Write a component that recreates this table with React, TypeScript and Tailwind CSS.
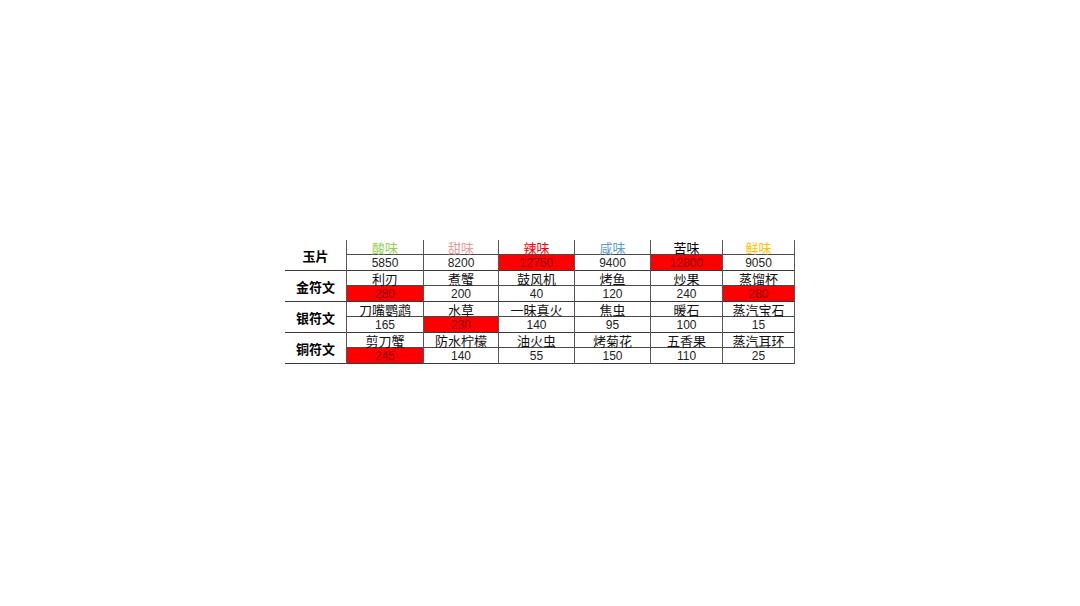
import React from "react";

type Cell = { text: string; color?: string; red?: boolean };

const widths = ["w-[77px]", "w-[75px]", "w-[76px]", "w-[76px]", "w-[72px]", "w-[73px]"];

const groups: { label: string; top: Cell[]; bottom: Cell[] }[] = [
  {
    label: "玉片",
    top: [
      { text: "酸味", color: "text-[#92d050]" },
      { text: "甜味", color: "text-[#e99a9a]" },
      { text: "辣味", color: "text-[#ff0000]" },
      { text: "咸味", color: "text-[#5b9bd5]" },
      { text: "苦味", color: "text-black" },
      { text: "鲜味", color: "text-[#ffc000]" },
    ],
    bottom: [
      { text: "5850" },
      { text: "8200" },
      { text: "12750", red: true },
      { text: "9400" },
      { text: "12800", red: true },
      { text: "9050" },
    ],
  },
  {
    label: "金符文",
    top: [{ text: "利刃" }, { text: "煮蟹" }, { text: "鼓风机" }, { text: "烤鱼" }, { text: "炒果" }, { text: "蒸馏杯" }],
    bottom: [
      { text: "280", red: true },
      { text: "200" },
      { text: "40" },
      { text: "120" },
      { text: "240" },
      { text: "280", red: true },
    ],
  },
  {
    label: "银符文",
    top: [{ text: "刀嘴鹦鹉" }, { text: "水草" }, { text: "一昧真火" }, { text: "焦虫" }, { text: "暖石" }, { text: "蒸汽宝石" }],
    bottom: [
      { text: "165" },
      { text: "230", red: true },
      { text: "140" },
      { text: "95" },
      { text: "100" },
      { text: "15" },
    ],
  },
  {
    label: "铜符文",
    top: [{ text: "剪刀蟹" }, { text: "防水柠檬" }, { text: "油火虫" }, { text: "烤菊花" }, { text: "五香果" }, { text: "蒸汽耳环" }],
    bottom: [
      { text: "245", red: true },
      { text: "140" },
      { text: "55" },
      { text: "150" },
      { text: "110" },
      { text: "25" },
    ],
  },
];

const cjk = "font-['Noto_Sans_CJK_SC','Noto_Sans',sans-serif]";
const num = "font-['Liberation_Sans',Arial,sans-serif]";

export default function App() {
  return (
    <div className="w-[1080px] h-[606px] bg-white flex items-center justify-center">
      <div className="flex flex-col w-[510px] mb-[2px]">
        {groups.map((g, gi) => (
          <div key={gi} className="flex">
            <div
              className={`w-[61px] h-[31px] border-b border-[#3a3a3a] flex items-center justify-center text-[13px] font-bold text-black leading-none ${cjk}`}
            >
              {g.label}
            </div>
            {g.top.map((t, ci) => {
              const b = g.bottom[ci];
              return (
                <div
                  key={ci}
                  className={`${widths[ci]} flex flex-col border-l border-[#555] ${ci === 5 ? "border-r" : ""}`}
                >
                  <div
                    className={`h-[15px] border-b border-[#4a4a4a] flex items-center justify-center text-[13px] leading-none ${cjk} ${t.color ?? "text-[#111]"}`}
                  >
                    {t.text}
                  </div>
                  <div
                    className={`h-[16px] border-b border-[#3a3a3a] flex items-center justify-center text-[12px] leading-none ${num} ${
                      b.red ? "bg-[#ff0000] text-[#8a0000]" : "text-[#222]"
                    }`}
                  >
                    {b.text}
                  </div>
                </div>
              );
            })}
          </div>
        ))}
      </div>
    </div>
  );
}
